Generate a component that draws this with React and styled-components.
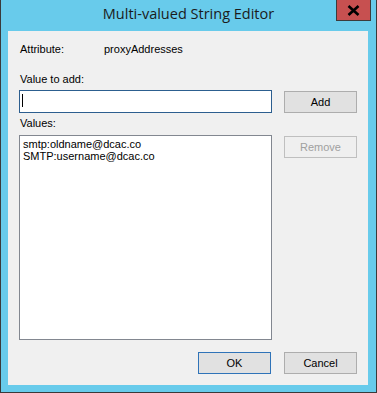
import React from "react";
import styled, { createGlobalStyle } from "styled-components";

const GlobalStyle = createGlobalStyle`
  html, body {
    margin: 0;
    padding: 0;
    background: #ffffff;
  }
  * {
    box-sizing: border-box;
  }
`;

const Frame = styled.div`
  width: 377px;
  height: 393px;
  background: #68cbeb;
  border: 1px solid #3a3a3a;
  border-top: none;
  padding: 0 8px 7px 7px;
  display: flex;
  flex-direction: column;
`;

const TitleBar = styled.div`
  height: 31px;
  margin: 0 -8px 0 -7px;
  display: grid;
  grid-template-columns: 1fr auto 1fr;
  align-items: start;
`;

const Title = styled.div`
  grid-column: 2;
  font-family: "Open Sans", "Noto Sans", sans-serif;
  font-size: 14.5px;
  line-height: 20px;
  padding-top: 4px;
  color: #1b1b1b;
  white-space: nowrap;
`;

const CloseButton = styled.div`
  grid-column: 3;
  justify-self: end;
  margin-right: 5px;
  width: 35px;
  height: 21px;
  background: #c75050;
  border: 1px solid #3c3c3c;
  border-top: none;
  display: flex;
  align-items: center;
  justify-content: center;
`;

const Client = styled.div`
  flex: 1;
  background: #f0f0f0;
  padding: 12px 11px 0 11px;
  display: flex;
  flex-direction: column;
  font-family: "Liberation Sans", Arial, sans-serif;
  font-size: 11px;
  color: #000;
`;

const AttrRow = styled.div`
  display: flex;
  height: 13px;
  line-height: 13px;
  padding-left: 1px;
`;

const AttrLabel = styled.span`
  width: 84px;
`;

const Label = styled.div`
  line-height: 13px;
  padding-left: 1px;
  margin-top: ${(p) => p.$gap}px;
`;

const Row = styled.div`
  display: grid;
  grid-template-columns: 253px 73px;
  column-gap: 12px;
  align-items: start;
  margin-top: ${(p) => p.$gap}px;
`;

const TextBox = styled.div`
  height: 23px;
  background: #fff;
  border: 1px solid #2c5e8f;
  padding: 2px 0 0 2px;
`;

const Caret = styled.div`
  width: 1px;
  height: 13px;
  margin-top: 1px;
  background: #000;
`;

const ListBox = styled.div`
  height: 205px;
  background: #fff;
  border: 1px solid #828790;
  padding: 2px 3px;
`;

const Item = styled.div`
  line-height: 12px;
  white-space: nowrap;
`;

const Button = styled.div`
  width: 73px;
  height: 22px;
  margin-top: ${(p) => p.$offset || 0}px;
  display: flex;
  align-items: center;
  justify-content: center;
  background: ${(p) => (p.$disabled ? "#efefef" : "#e1e1e1")};
  border: 1px solid
    ${(p) => (p.$default ? "#2f73b8" : p.$disabled ? "#bfbfbf" : "#adadad")};
  color: ${(p) => (p.$disabled ? "#a0a0a0" : "#000")};
`;

const Footer = styled.div`
  display: flex;
  justify-content: flex-end;
  gap: 13px;
  margin-top: 12px;
`;

const values = ["smtp:oldname@dcac.co", "SMTP:username@dcac.co"];

const App = () => {
  return (
    <>
      <GlobalStyle />
      <Frame>
        <TitleBar>
          <Title>Multi-valued String Editor</Title>
          <CloseButton>
            <svg width="13" height="11" viewBox="0 0 13 11">
              <path
                d="M1.5 1 L11.5 10 M11.5 1 L1.5 10"
                stroke="#000"
                strokeWidth="2.6"
              />
            </svg>
          </CloseButton>
        </TitleBar>
        <Client>
          <AttrRow>
            <AttrLabel>Attribute:</AttrLabel>
            <span>proxyAddresses</span>
          </AttrRow>
          <Label $gap={17}>Value to add:</Label>
          <Row $gap={4}>
            <TextBox>
              <Caret />
            </TextBox>
            <Button $offset={1}>Add</Button>
          </Row>
          <Label $gap={4}>Values:</Label>
          <Row $gap={5}>
            <ListBox>
              {values.map((v) => (
                <Item key={v}>{v}</Item>
              ))}
            </ListBox>
            <Button $offset={1} $disabled>
              Remove
            </Button>
          </Row>
          <Footer>
            <Button $default>OK</Button>
            <Button>Cancel</Button>
          </Footer>
        </Client>
      </Frame>
    </>
  );
};

export default App;
